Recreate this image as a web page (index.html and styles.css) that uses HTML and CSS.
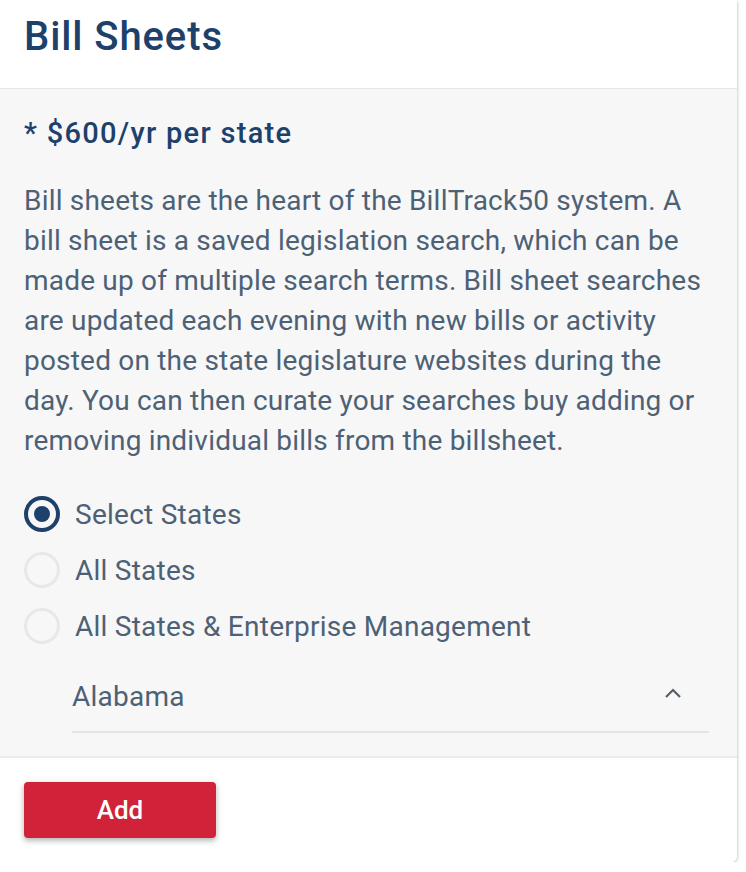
FILE: index.html
```html
<!DOCTYPE html>
<html>
<head>
<meta charset="utf-8">
<link rel="stylesheet" href="styles.css">
</head>
<body>
<div class="card">
  <div class="card-header">
    <h1 class="title">Bill Sheets</h1>
  </div>
  <div class="card-body">
    <div class="price">* $600/yr per state</div>
    <p class="desc">Bill sheets are the heart of the BillTrack50 system. A bill sheet is a saved legislation search, which can be made up of multiple search terms. Bill sheet searches are updated each evening with new bills or activity posted on the state legislature websites during the day. You can then curate your searches buy adding or removing individual bills from the billsheet.</p>
    <div class="radios">
      <div class="radio-row">
        <span class="radio radio-on"><span class="dot"></span></span>
        <span class="radio-label">Select States</span>
      </div>
      <div class="radio-row">
        <span class="radio"></span>
        <span class="radio-label">All States</span>
      </div>
      <div class="radio-row">
        <span class="radio"></span>
        <span class="radio-label">All States &amp; Enterprise Management</span>
      </div>
    </div>
    <div class="select">
      <span class="select-value">Alabama</span>
      <svg class="chevron" width="20" height="12" viewBox="0 0 20 12"><path d="M3 10 L10 3 L17 10" fill="none" stroke="#555f69" stroke-width="2.2"/></svg>
    </div>
  </div>
  <div class="card-footer">
    <button class="btn-add">Add</button>
  </div>
</div>
</body>
</html>
```

FILE: styles.css
```css
html, body {
  margin: 0;
  padding: 0;
  background: #ffffff;
}
body {
  font-family: Roboto, "Liberation Sans", sans-serif;
}
.card {
  width: 737px;
  background: #ffffff;
  border-radius: 0 0 6px 0;
  box-shadow: 0 2px 4px rgba(0,0,0,0.18), 1px 0 2px rgba(0,0,0,0.08);
  overflow: hidden;
}
.card-header {
  height: 89px;
  box-sizing: border-box;
  padding: 12px 24px 0;
  border-bottom: 1px solid #e6e6e6;
}
.title {
  margin: 0;
  font-size: 40px;
  font-weight: 500;
  line-height: 50px;
  letter-spacing: 0.9px;
  color: #1d416b;
}
.card-body {
  background: #f7f7f7;
  padding: 24px 24px 23px;
  border-bottom: 2px solid #ececec;
}
.price {
  font-size: 29px;
  font-weight: 500;
  line-height: 40px;
  color: #1d416b;
  letter-spacing: 1.3px;
}
.desc {
  margin: 28px 0 0;
  font-size: 28px;
  line-height: 40px;
  color: #4d6176;
  letter-spacing: 0.2px;
}
.radios {
  margin-top: 35px;
  display: flex;
  flex-direction: column;
  gap: 20px;
}
.radio-row {
  display: flex;
  align-items: center;
  height: 36px;
}
.radio {
  width: 36px;
  height: 36px;
  box-sizing: border-box;
  border-radius: 50%;
  border: 3px solid #e8e8e8;
  display: flex;
  align-items: center;
  justify-content: center;
  flex-shrink: 0;
}
.radio-on {
  border: 4.5px solid #1d416b;
}
.dot {
  width: 16px;
  height: 16px;
  border-radius: 50%;
  background: #1d416b;
}
.radio-label {
  margin-left: 15px;
  font-size: 28px;
  letter-spacing: 0.25px;
  color: #4d6176;
}
.select {
  margin: 23px 4px 0 48px;
  height: 66px;
  box-sizing: border-box;
  border-bottom: 2px solid #e4e4e4;
  display: flex;
  align-items: flex-start;
  justify-content: space-between;
  padding-top: 10px;
}
.select-value {
  font-size: 28px;
  line-height: 40px;
  letter-spacing: 0.25px;
  color: #4d6176;
}
.chevron {
  margin: 10px 26px 0 0;
}
.card-footer {
  background: #ffffff;
  padding: 24px 24px 24px;
}
.btn-add {
  width: 192px;
  height: 56px;
  border: none;
  border-radius: 4px;
  background: #d02238;
  color: #ffffff;
  font-family: Roboto, "Liberation Sans", sans-serif;
  font-size: 26px;
  font-weight: 500;
  box-shadow: 0 3px 5px rgba(0,0,0,0.22), 0 1px 10px rgba(0,0,0,0.1);
  display: block;
}
```
